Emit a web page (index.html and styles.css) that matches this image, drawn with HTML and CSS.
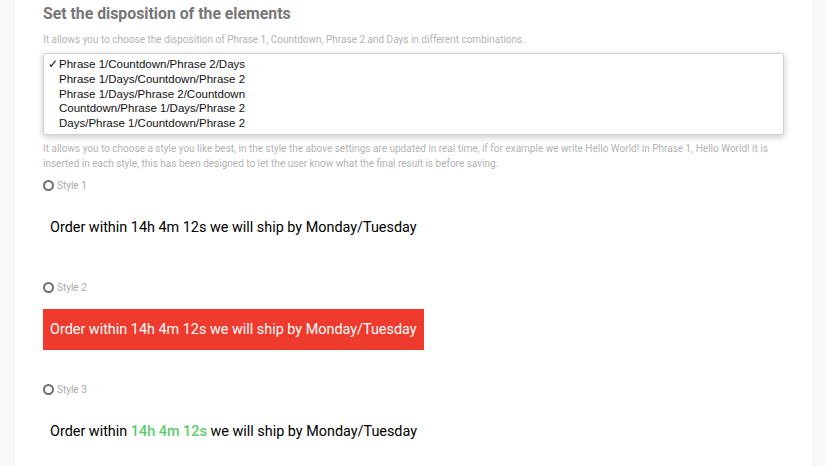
FILE: index.html
```html
<!DOCTYPE html>
<html lang="en">
<head>
<meta charset="utf-8">
<title>Disposition settings</title>
<link rel="stylesheet" href="styles.css">
</head>
<body>
<div class="page">
  <main class="card">
    <h2 class="title">Set the disposition of the elements</h2>
    <p class="desc">It allows you to choose the disposition of Phrase 1, Countdown, Phrase 2 and Days in different combinations.</p>
    <div class="select-area">
      <ul class="dropdown">
        <li class="opt selected"><span class="check">✓</span>Phrase 1/Countdown/Phrase 2/Days</li>
        <li class="opt"><span class="check"></span>Phrase 1/Days/Countdown/Phrase 2</li>
        <li class="opt"><span class="check"></span>Phrase 1/Days/Phrase 2/Countdown</li>
        <li class="opt"><span class="check"></span>Countdown/Phrase 1/Days/Phrase 2</li>
        <li class="opt"><span class="check"></span>Days/Phrase 1/Countdown/Phrase 2</li>
      </ul>
    </div>
    <p class="desc desc-wide">It allows you to choose a style you like best, in the style the above settings are updated in real time, if for example we write Hello World! in Phrase 1, Hello World! it is inserted in each style, this has been designed to let the user know what the final result is before saving.</p>

    <div class="styles">
      <div class="style-option">
        <label class="radio"><span class="circle"></span>Style 1</label>
        <div class="preview"><span class="banner plain">Order within 14h 4m 12s we will ship by Monday/Tuesday</span></div>
      </div>
      <div class="style-option">
        <label class="radio"><span class="circle"></span>Style 2</label>
        <div class="preview"><span class="banner red">Order within 14h 4m 12s we will ship by Monday/Tuesday</span></div>
      </div>
      <div class="style-option">
        <label class="radio"><span class="circle"></span>Style 3</label>
        <div class="preview"><span class="banner plain">Order within <span class="green">14h 4m 12s</span> we will ship by Monday/Tuesday</span></div>
      </div>
    </div>
  </main>
  <div class="edge"></div>
</div>
</body>
</html>
```
FILE: styles.css
```css
html, body {
  margin: 0;
  padding: 0;
}
body {
  background: #f8f8f8;
  font-family: Roboto, "Liberation Sans", Arial, sans-serif;
  overflow: hidden;
}
.page {
  display: flex;
  height: 466px;
}
.card {
  margin-left: 13px;
  width: 739px;
  padding: 4px 30px 0 30px;
  background: #ffffff;
  border-left: 1px solid #f0f0f0;
  border-right: 1px solid #f0f0f0;
}
.edge {
  margin-left: 11px;
  flex: 1;
  background: #ffffff;
}
.title {
  margin: 0;
  font-size: 15.8px;
  line-height: 20px;
  font-weight: 700;
  color: #767676;
  margin-left: -1px;
}
.desc {
  margin: 9px 0 0 -1px;
  font-size: 10px;
  line-height: 14px;
  color: #b3b3b3;
}
.desc-wide {
  margin-top: 0;
  line-height: 15px;
}
.select-area {
  position: relative;
  height: 94px;
}
.dropdown {
  position: absolute;
  top: 6px;
  left: -1px;
  right: -1px;
  margin: 0;
  padding: 3px 0;
  list-style: none;
  background: #ffffff;
  border: 1px solid #d2d2d2;
  border-radius: 2px;
  box-shadow: 0 2px 7px rgba(0, 0, 0, 0.22);
  font-family: "Liberation Sans", Arial, sans-serif;
  font-size: 11.5px;
  line-height: 14.75px;
  color: #111111;
}
.opt {
  display: flex;
  padding-left: 4px;
}
.check {
  width: 11px;
  flex: none;
  font-size: 12px;
}
.styles {
  margin-top: 7px;
  margin-left: -1px;
}
.style-option {
  margin-bottom: 32px;
}
.radio {
  display: flex;
  align-items: center;
  height: 14px;
  font-size: 10px;
  color: #a9a9a9;
}
.circle {
  box-sizing: border-box;
  width: 11px;
  height: 11px;
  border: 2px solid #6e6e6e;
  border-radius: 50%;
  margin-right: 3px;
}
.preview {
  margin-top: 15px;
  height: 41px;
}
.banner {
  display: inline-block;
  padding: 0 7px;
  height: 41px;
  line-height: 41px;
  font-size: 14.4px;
  color: #000000;
}
.banner.red {
  background: #ee3b2d;
  color: #ffffff;
}
.green {
  color: #5ccc6c;
  font-weight: 500;
}
```
